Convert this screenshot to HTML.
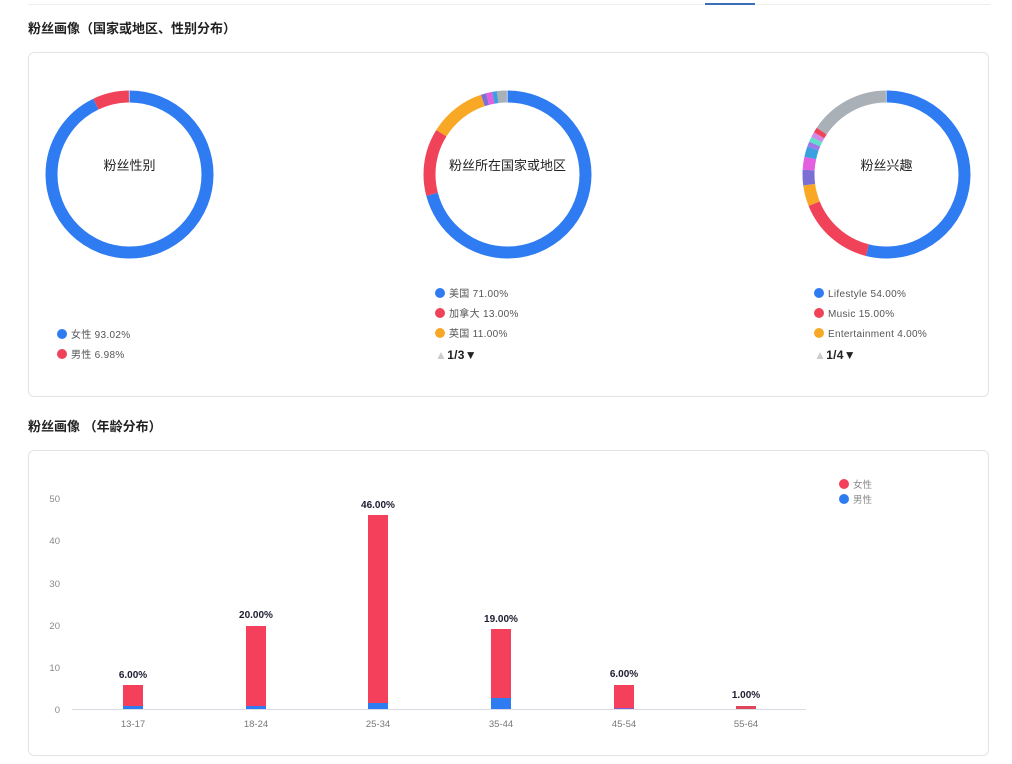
<!DOCTYPE html>
<html><head><meta charset="utf-8"><style>
body{margin:0;width:1012px;height:764px;background:#fff;font-family:"Liberation Sans","Noto Sans CJK SC",sans-serif;position:relative;overflow:hidden}
.abs{position:absolute}
h3{position:absolute;margin:0;font-size:13px;font-weight:bold;color:#222}
.card{position:absolute;border:1px solid #e3e3e3;border-radius:6px;background:#fff}
.lg{position:absolute;font-size:10px;color:#555;line-height:20px;letter-spacing:.3px}
.dot{display:inline-block;width:10px;height:10px;border-radius:50%;vertical-align:-1px;margin-right:4px}
.pg{font-size:12px;color:#222;font-weight:bold}
</style></head><body>
<div class="abs" style="left:28px;top:4px;width:962px;height:1px;background:#eee"></div>
<div class="abs" style="left:705px;top:3px;width:50px;height:2px;background:#3b6fb6"></div>
<h3 style="left:28px;top:18px">粉丝画像（国家或地区、性别分布）</h3>
<div class="card" style="left:28px;top:52px;width:959px;height:343px"></div>
<svg class="abs" style="left:0;top:0" width="1012" height="400">
<g fill="none" stroke-width="12">
<g transform="rotate(-90 129.5 174.5)">
<circle cx="129.5" cy="174.5" r="78" pathLength="100" stroke="#2f7bf2" stroke-dasharray="93.02 100"/>
<circle cx="129.5" cy="174.5" r="78" pathLength="100" stroke="#f0435a" stroke-dasharray="6.98 100" stroke-dashoffset="-93.02"/>
</g>
<g transform="rotate(-90 507.5 174.5)">
<circle cx="507.5" cy="174.5" r="78" pathLength="100" stroke="#2f7bf2" stroke-dasharray="71 100"/>
<circle cx="507.5" cy="174.5" r="78" pathLength="100" stroke="#f0435a" stroke-dasharray="13 100" stroke-dashoffset="-71"/>
<circle cx="507.5" cy="174.5" r="78" pathLength="100" stroke="#f9a825" stroke-dasharray="11 100" stroke-dashoffset="-84"/>
<circle cx="507.5" cy="174.5" r="78" pathLength="100" stroke="#7b6fd6" stroke-dasharray="1 100" stroke-dashoffset="-95"/>
<circle cx="507.5" cy="174.5" r="78" pathLength="100" stroke="#e45fe0" stroke-dasharray="1.2 100" stroke-dashoffset="-96"/>
<circle cx="507.5" cy="174.5" r="78" pathLength="100" stroke="#3aa0e0" stroke-dasharray="0.9 100" stroke-dashoffset="-97.2"/>
<circle cx="507.5" cy="174.5" r="78" pathLength="100" stroke="#aab0b8" stroke-dasharray="1.9 100" stroke-dashoffset="-98.1"/>
</g>
<g transform="rotate(-90 886.5 174.5)">
<circle cx="886.5" cy="174.5" r="78" pathLength="100" stroke="#2f7bf2" stroke-dasharray="54 100"/>
<circle cx="886.5" cy="174.5" r="78" pathLength="100" stroke="#f0435a" stroke-dasharray="15 100" stroke-dashoffset="-54"/>
<circle cx="886.5" cy="174.5" r="78" pathLength="100" stroke="#f9a825" stroke-dasharray="4 100" stroke-dashoffset="-69"/>
<circle cx="886.5" cy="174.5" r="78" pathLength="100" stroke="#7b6fd6" stroke-dasharray="3 100" stroke-dashoffset="-73"/>
<circle cx="886.5" cy="174.5" r="78" pathLength="100" stroke="#e45fe0" stroke-dasharray="2.5 100" stroke-dashoffset="-76"/>
<circle cx="886.5" cy="174.5" r="78" pathLength="100" stroke="#3aa0e0" stroke-dasharray="2 100" stroke-dashoffset="-78.5"/>
<circle cx="886.5" cy="174.5" r="78" pathLength="100" stroke="#9a7be8" stroke-dasharray="1 100" stroke-dashoffset="-80.5"/>
<circle cx="886.5" cy="174.5" r="78" pathLength="100" stroke="#5fe0c8" stroke-dasharray="1 100" stroke-dashoffset="-81.5"/>
<circle cx="886.5" cy="174.5" r="78" pathLength="100" stroke="#d08ae8" stroke-dasharray="1 100" stroke-dashoffset="-82.5"/>
<circle cx="886.5" cy="174.5" r="78" pathLength="100" stroke="#f0435a" stroke-dasharray="1 100" stroke-dashoffset="-83.5"/>
<circle cx="886.5" cy="174.5" r="78" pathLength="100" stroke="#aab0b8" stroke-dasharray="15.5 100" stroke-dashoffset="-84.5"/>
</g>
</g>
<g font-size="13" fill="#222" text-anchor="middle" font-family="Liberation Sans,Noto Sans CJK SC,sans-serif">
<text x="129.5" y="170">粉丝性别</text>
<text x="507.5" y="170">粉丝所在国家或地区</text>
<text x="886.5" y="170">粉丝兴趣</text>
</g>
</svg>
<div class="lg" style="left:57px;top:326px"><span class="dot" style="background:#2f7bf2"></span>女性 93.02%<br><span class="dot" style="background:#f0435a"></span>男性 6.98%</div>
<div class="lg" style="left:435px;top:285px"><span class="dot" style="background:#2f7bf2"></span>美国 71.00%<br><span class="dot" style="background:#f0435a"></span>加拿大 13.00%<br><span class="dot" style="background:#f9a825"></span>英国 11.00%<br><span class="pg"><span style="color:#ccc">▲</span>1/3▼</span></div>
<div class="lg" style="left:814px;top:285px"><span class="dot" style="background:#2f7bf2"></span>Lifestyle 54.00%<br><span class="dot" style="background:#f0435a"></span>Music 15.00%<br><span class="dot" style="background:#f9a825"></span>Entertainment 4.00%<br><span class="pg"><span style="color:#ccc">▲</span>1/4▼</span></div>

<h3 style="left:28px;top:416px">粉丝画像 （年龄分布）</h3>
<div class="card" style="left:28px;top:450px;width:959px;height:304px"></div>
<svg class="abs" style="left:0;top:0" width="1012" height="764" font-family="Liberation Sans,Noto Sans CJK SC,sans-serif">
<g font-size="9.5" fill="#888" text-anchor="end">
<text x="60" y="502">50</text><text x="60" y="544">40</text><text x="60" y="587">30</text><text x="60" y="629">20</text><text x="60" y="671">10</text><text x="60" y="713">0</text>
</g>
<line x1="72" y1="709.5" x2="806" y2="709.5" stroke="#d8dbe2"/>
<g>
<rect x="123" y="685" width="20" height="24" fill="#f4405a"/><rect x="123" y="706" width="20" height="3" fill="#2f7bf2"/>
<rect x="246" y="626" width="20" height="83" fill="#f4405a"/><rect x="246" y="706" width="20" height="3" fill="#2f7bf2"/>
<rect x="368" y="515" width="20" height="194" fill="#f4405a"/><rect x="368" y="703" width="20" height="6" fill="#2f7bf2"/>
<rect x="491" y="629" width="20" height="80" fill="#f4405a"/><rect x="491" y="698" width="20" height="11" fill="#2f7bf2"/>
<rect x="614" y="685" width="20" height="24" fill="#f4405a"/><rect x="614" y="708" width="20" height="1" fill="#8a5bd0"/>
<rect x="736" y="706" width="20" height="3" fill="#e0455a"/>
</g>
<g font-size="10" font-weight="bold" fill="#1c1c30" text-anchor="middle">
<text x="133" y="678">6.00%</text><text x="256" y="618">20.00%</text><text x="378" y="508">46.00%</text><text x="501" y="622">19.00%</text><text x="624" y="677">6.00%</text><text x="746" y="698">1.00%</text>
</g>
<g font-size="9.5" fill="#777" text-anchor="middle">
<text x="133" y="727">13-17</text><text x="256" y="727">18-24</text><text x="378" y="727">25-34</text><text x="501" y="727">35-44</text><text x="624" y="727">45-54</text><text x="746" y="727">55-64</text>
</g>
<circle cx="844" cy="484" r="5" fill="#f4405a"/><circle cx="844" cy="499" r="5" fill="#2f7bf2"/>
<g font-size="9.5" fill="#888"><text x="853" y="488">女性</text><text x="853" y="503">男性</text></g>
</svg>
</body></html>
